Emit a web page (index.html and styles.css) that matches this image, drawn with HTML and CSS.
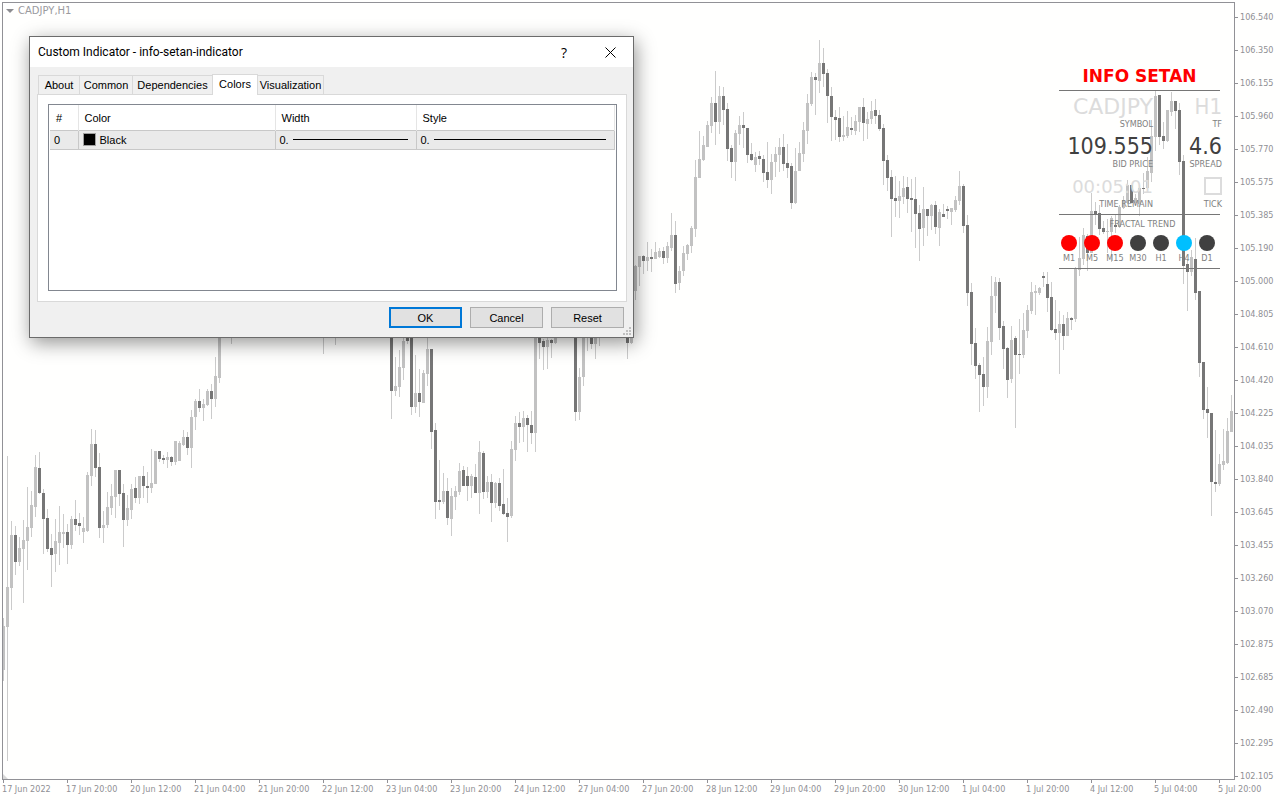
FILE: index.html
```
<!DOCTYPE html>
<html lang="en">
<head>
    <meta charset="UTF-8">
    <title>CADJPY,H1</title>
    <link rel="stylesheet" href="styles.css">
</head>
<body>
    <main class="terminal">
        <section class="plot">
            <svg class="candles" id="candles" aria-hidden="true"></svg>
            <div class="chart-symbol">
                <svg width="8" height="4" viewBox="0 0 8 4"><path d="M0 0h8L4 4z" fill="#8c8c90"/></svg>
                CADJPY,H1
            </div>
            <div class="corner-mark"></div>

            <aside class="info">
                <h1 class="info-title">INFO SETAN</h1>
                <div class="stats">
                    <div class="stat">
                        <span class="value muted">CADJPY</span>
                        <span class="caption">SYMBOL</span>
                    </div>
                    <div class="stat">
                        <span class="value">H1</span>
                        <span class="caption">TF</span>
                    </div>
                    <div class="stat">
                        <span class="value price">109.555</span>
                        <span class="caption">BID PRICE</span>
                    </div>
                    <div class="stat">
                        <span class="value price">4.6</span>
                        <span class="caption">SPREAD</span>
                    </div>
                    <div class="stat">
                        <span class="value timer">00:05:01</span>
                        <span class="caption">TIME REMAIN</span>
                    </div>
                    <div class="stat">
                        <span class="value"><i class="tick-box"></i></span>
                        <span class="caption">TICK</span>
                    </div>
                </div>
                <div class="trend">
                    <div class="trend-title">FRACTAL TREND</div>
                    <ul class="trend-list">
                        <li class="down">M1</li>
                        <li class="down">M5</li>
                        <li class="down">M15</li>
                        <li>M30</li>
                        <li>H1</li>
                        <li class="up">H4</li>
                        <li>D1</li>
                    </ul>
                </div>
            </aside>
        </section>

        <ul class="price-axis">
            <li>106.540</li>
            <li>106.350</li>
            <li>106.155</li>
            <li>105.960</li>
            <li>105.770</li>
            <li>105.575</li>
            <li>105.385</li>
            <li>105.190</li>
            <li>105.000</li>
            <li>104.805</li>
            <li>104.610</li>
            <li>104.420</li>
            <li>104.225</li>
            <li>104.035</li>
            <li>103.840</li>
            <li>103.645</li>
            <li>103.455</li>
            <li>103.260</li>
            <li>103.070</li>
            <li>102.875</li>
            <li>102.685</li>
            <li>102.490</li>
            <li>102.295</li>
            <li>102.105</li>
        </ul>

        <ul class="time-axis">
            <li>17 Jun 2022</li>
            <li>17 Jun 20:00</li>
            <li>20 Jun 12:00</li>
            <li>21 Jun 04:00</li>
            <li>21 Jun 20:00</li>
            <li>22 Jun 12:00</li>
            <li>23 Jun 04:00</li>
            <li>23 Jun 20:00</li>
            <li>24 Jun 12:00</li>
            <li>27 Jun 04:00</li>
            <li>27 Jun 20:00</li>
            <li>28 Jun 12:00</li>
            <li>29 Jun 04:00</li>
            <li>29 Jun 20:00</li>
            <li>30 Jun 12:00</li>
            <li>1 Jul 04:00</li>
            <li>1 Jul 20:00</li>
            <li>4 Jul 12:00</li>
            <li>5 Jul 04:00</li>
            <li>5 Jul 20:00</li>
        </ul>
    </main>

    <div class="dialog" role="dialog" aria-labelledby="dialogTitle">
        <header class="titlebar">
            <h2 id="dialogTitle">Custom Indicator - info-setan-indicator</h2>
            <button class="title-button" type="button">?</button>
            <button class="title-button" type="button" aria-label="Close">
                <svg width="11" height="11" viewBox="0 0 11 11"><path d="M.5.5l10 10M10.5.5l-10 10" stroke="#000"/></svg>
            </button>
        </header>
        <div class="tabs" role="tablist">
            <button class="tab tab-about" role="tab">About</button>
            <button class="tab tab-common" role="tab">Common</button>
            <button class="tab tab-deps" role="tab">Dependencies</button>
            <button class="tab tab-colors active" role="tab" aria-selected="true">Colors</button>
            <button class="tab tab-visual" role="tab">Visualization</button>
        </div>
        <div class="pane" role="tabpanel">
            <div class="list">
                <table>
                    <thead>
                        <tr>
                            <th class="col-num">#</th>
                            <th class="col-color">Color</th>
                            <th class="col-width">Width</th>
                            <th class="col-style">Style</th>
                        </tr>
                    </thead>
                    <tbody>
                        <tr>
                            <td>0</td>
                            <td><div class="cell"><i class="swatch"></i>Black</div></td>
                            <td><div class="cell">0.<i class="line"></i></div></td>
                            <td><div class="cell">0.<i class="line"></i></div></td>
                        </tr>
                    </tbody>
                </table>
            </div>
        </div>
        <footer class="actions">
            <button class="default" type="button">OK</button>
            <button type="button">Cancel</button>
            <button type="button">Reset</button>
        </footer>
        <svg class="grip" width="8" height="8" viewBox="0 0 8 8" fill="#bfbfbf"><path d="M6 0h2v2h-2zM3 3h2v2h-2zM6 3h2v2h-2zM0 6h2v2h-2zM3 6h2v2h-2zM6 6h2v2h-2z"/></svg>
    </div>

    <script src="chart.js"></script>
</body>
</html>
```
FILE: styles.css
```
* {
    box-sizing: border-box;
}

body {
    margin: 0;
    background: #fffffe;
    font-family: "Liberation Sans", Arial, sans-serif;
    font-size: 11px;
    color: #000;
    overflow: hidden;
}

ul {
    list-style: none;
    margin: 0;
    padding: 0;
}

button {
    font: inherit;
    color: inherit;
    padding: 0;
}

/* chart */
.terminal {
    display: grid;
    grid-template-columns: minmax(0, 1fr) 45px;
    grid-template-rows: minmax(0, 1fr) 20px;
    height: 100vh;
    padding: 2px 0 0 2px;
    font-family: "DejaVu Sans Condensed", "DejaVu Sans", sans-serif;
    font-size: 9px;
    color: #8f8f94;
}

.plot {
    position: relative;
    border: 1px solid #919196;
    overflow: hidden;
}

.candles {
    display: block;
    width: 100%;
    height: 100%;
    shape-rendering: crispEdges;
}

.candles .wick { fill: #cbcbcb; }
.candles .bull { fill: #c2c2c2; }
.candles .bear { fill: #767676; }

.chart-symbol {
    position: absolute;
    top: 2px;
    left: 3px;
    display: flex;
    align-items: center;
    gap: 4px;
    line-height: 12px;
    font-family: "DejaVu Sans", sans-serif;
    font-size: 10px;
    color: #9a9a9e;
}

.corner-mark {
    position: absolute;
    left: 0;
    bottom: 0;
    border-left: 5px solid #d8d8d8;
    border-top: 5px solid transparent;
}

.price-axis {
    overflow: hidden;
}

.price-axis li {
    display: flex;
    align-items: center;
    gap: 2px;
    line-height: 31px;
    margin-bottom: 2px;
}

.price-axis li::before {
    content: '';
    width: 3px;
    height: 1px;
    background: #919196;
}

.time-axis {
    grid-column: 1 / 3;
    display: flex;
    overflow: hidden;
}

.time-axis li {
    flex: 0 0 64px;
    line-height: 12px;
    white-space: nowrap;
}

.time-axis li::before {
    content: '';
    display: block;
    width: 1px;
    height: 3px;
    margin-left: 1px;
    background: #919196;
}

/* info panel over the chart */
.info {
    position: absolute;
    top: 59px;
    right: 14px;
    width: 161px;
    color: #808080;
}

.info-title {
    margin: 0;
    font: bold 17px/28px "DejaVu Sans", sans-serif;
    color: #f00;
    text-align: center;
}

.stats {
    display: grid;
    grid-template-columns: 94px 69px;
    row-gap: 4px;
    padding: 1px 0 6px;
    border-top: 1px solid #767676;
}

.stat {
    display: flex;
    flex-direction: column;
    align-items: flex-end;
}

.value {
    display: flex;
    align-items: center;
    height: 28px;
    font-size: 22px;
    color: #dcdcdc;
}

.value.muted {
    font-family: "DejaVu Sans", sans-serif;
}

.value.price {
    font-size: 23px;
    color: #404040;
}

.value.timer {
    font-family: "DejaVu Sans", sans-serif;
    font-size: 18px;
}

.tick-box {
    width: 18px;
    height: 18px;
    border: 2px solid #dcdcdc;
}

.caption {
    line-height: 8px;
}

.trend {
    padding: 4px 0 6px;
    border: solid #767676;
    border-width: 1px 0;
}

.trend-title {
    line-height: 10px;
    padding-left: 6px;
    text-align: center;
}

.trend-list {
    display: flex;
    margin-top: 6px;
}

.trend-list li {
    flex: 1;
    padding-right: 3px;
    line-height: 8px;
    text-align: center;
}

.trend-list li::before {
    content: '';
    display: block;
    width: 16px;
    height: 16px;
    margin: 0 0 3px 2px;
    border-radius: 50%;
    background: #404040;
}

.trend-list .down::before { background: #f00; }
.trend-list .up::before { background: #00bfff; }

/* dialog */
.dialog {
    position: absolute;
    top: 36px;
    left: 29px;
    width: 605px;
    background: #f0f0f0;
    border: 1px solid #6b6b6b;
    box-shadow: 2px 5px 18px rgba(0, 0, 0, 0.42);
}

.titlebar {
    display: flex;
    height: 30px;
    background: #fff;
}

.titlebar h2 {
    flex: 1;
    margin: 0;
    padding-left: 8px;
    font: 12px/30px Roboto, "Open Sans", sans-serif;
}

.title-button {
    display: flex;
    align-items: center;
    justify-content: center;
    width: 46px;
    background: none;
    border: 0;
    font: 14px "Open Sans", sans-serif;
}

.tabs {
    display: flex;
    align-items: flex-end;
    margin: 7px 0 0 8px;
}

.tab {
    height: 19px;
    background: #f0f0f0;
    border: 1px solid #d9d9d9;
    border-left-width: 0;
    border-bottom: 0;
}

.tab-about {
    width: 42px;
    border-left-width: 1px;
}

.tab-common { width: 53px; }
.tab-deps { width: 79px; border-right: 0; }
.tab-colors { width: 46px; }
.tab-visual { width: 66px; }

.tab.active {
    position: relative;
    height: 21px;
    margin-bottom: -1px;
    padding-bottom: 2px;
    background: #fff;
    border-left-width: 1px;
}

.pane {
    margin: 0 6px 0 7px;
    padding: 9px 9px 10px 10px;
    background: #fff;
    border: 1px solid #d9d9d9;
}

.list {
    min-height: 187px;
    padding: 0 1px;
    border: 1px solid #828790;
}

table {
    width: 100%;
    table-layout: fixed;
    border-collapse: collapse;
}

th {
    height: 25px;
    padding: 1px 0 0 6px;
    border-right: 1px solid #e5e5e5;
    font-weight: normal;
    text-align: left;
}

.col-num { width: 28px; }
.col-color { width: 197px; }
.col-width { width: 141px; }

td {
    height: 19px;
    padding: 0 8px 0 4px;
    background: #eaeaea;
    border: 1px solid #c8c8c8;
    border-left: 0;
}

.cell {
    display: flex;
    align-items: center;
    gap: 4px;
}

.swatch {
    width: 13px;
    height: 13px;
    background: #000;
    border: 1px solid #a0a0a0;
}

.line {
    flex: 1;
    height: 1px;
    background: #000;
}

.actions {
    display: flex;
    justify-content: flex-end;
    gap: 8px;
    padding: 5px 9px 9px;
}

.actions button {
    width: 73px;
    height: 21px;
    background: #e1e1e1;
    border: 1px solid #adadad;
}

.actions .default {
    border: 2px solid #0078d7;
}

.grip {
    position: absolute;
    right: 2px;
    bottom: 2px;
}
```
FILE: chart.js
```
// high, body top, body bottom, low, direction (1 up, 0 down)
const TOP = 3;
const STEP = 4;

const bars = {
    0: [
        [618,626,670,681,1],[456,587,627,761,1],[521,535,588,610,1],[526,535,562,575,0],[537,548,562,566,1],
        [520,540,549,603,1],[487,527,541,570,1],[491,505,528,537,1],[455,467,507,517,1],[452,468,493,494,0],
        [489,493,519,554,0],[509,518,549,552,0],[534,548,555,587,0],[519,541,554,572,1],[506,532,543,565,1],
        [514,532,534,548,1],[524,532,545,564,0],[516,519,545,549,1],[500,519,525,531,0],[513,523,526,535,0],
        [517,528,532,543,1],[472,475,531,532,1],[429,444,476,486,1],[430,444,468,477,0],[453,467,528,538,0],
        [511,525,528,543,1],[492,507,525,528,1],[484,496,508,515,1],[470,470,497,518,1],[470,470,494,506,0],
        [484,493,520,547,0],[495,508,520,526,1],[484,489,510,519,1],[477,488,498,503,0],[476,476,498,504,1],
        [466,476,486,498,0],[472,486,488,503,0],[449,483,488,493,1],[451,451,484,484,1],[451,451,459,462,0],
        [455,458,460,464,0],[452,457,460,468,1],[456,457,462,466,0],[441,441,462,465,1],[441,443,461,461,1],
        [430,437,445,446,1],[432,437,448,455,0],[410,417,448,468,1],[399,401,417,430,1],[389,401,408,412,0],
        [399,404,408,421,1],[389,391,405,406,1],[384,391,399,419,0],[357,376,399,407,1],[300,310,378,383,1]
    ],
    57: [[300,310,330,344,1]],
    80: [[300,310,330,354,1]],
    83: [[300,310,330,345,1]],
    97: [
        [300,310,391,419,0],[357,386,391,396,1],[350,367,387,397,1],[330,341,368,380,1],[320,325,341,344,0],
        [320,325,407,415,0],[355,393,407,413,1],[369,393,402,417,0],[370,373,403,403,1],[330,349,374,386,1],
        [349,349,432,449,0],[423,430,502,519,0],[460,500,502,510,0],[473,491,502,504,1],[478,491,518,525,0],
        [488,496,519,536,1],[486,491,497,510,1],[463,471,492,495,1],[466,470,486,486,0],[467,476,486,501,0],
        [474,476,486,498,1],[464,477,493,493,0],[441,452,493,514,1],[451,453,492,499,0],[476,482,492,498,1],
        [474,482,503,522,0],[482,483,503,508,1],[478,483,506,511,0],[469,504,514,515,0],[498,513,517,542,0],
        [441,449,516,518,1],[416,423,450,461,1],[412,423,427,443,0],[411,418,427,442,1],[415,418,425,452,0],
        [411,425,433,444,0],[320,325,433,452,1],[320,325,343,359,0],[339,341,347,370,0],[330,340,347,369,1],
        [339,340,343,358,0],[320,325,343,344,1]
    ],
    143: [
        [320,325,412,421,0],[368,377,412,420,1],[320,325,377,386,1],[320,325,330,351,1],[320,325,344,349,0],
        [320,325,344,359,1],[320,325,330,346,1]
    ],
    156: [
        [320,325,343,359,0],[320,325,343,344,1],[265,266,291,300,1],[256,256,267,286,1],[255,256,261,274,0],
        [242,257,261,271,1],[249,257,259,272,0],[242,252,259,259,1],[248,251,257,258,1],[247,251,258,264,0],
        [242,246,258,263,1],[213,235,248,251,1],[221,235,284,293,0],[266,271,283,290,1],[246,253,271,276,1],
        [244,245,254,260,1],[226,228,246,253,1],[160,177,229,237,1],[131,159,178,178,1],[136,145,160,161,1],
        [121,125,147,147,1],[97,103,126,133,1],[71,103,122,145,0],[86,96,122,134,1],[87,96,110,125,0],
        [103,109,149,161,0],[145,148,162,178,0],[130,133,162,181,1],[116,125,134,145,1],[112,125,128,148,0],
        [128,128,155,163,0],[143,154,160,161,0],[152,157,165,172,1],[151,156,159,165,0],[155,159,173,182,0],
        [142,172,180,188,0],[154,162,180,194,1],[147,154,162,177,1],[138,147,155,172,1],[134,147,164,171,0],
        [144,163,168,178,0],[163,166,203,209,0],[148,171,203,204,1],[142,153,171,171,1],[122,130,154,162,1],
        [94,103,131,144,1],[72,77,104,106,1],[73,77,80,115,0],[40,63,81,93,1],[48,63,74,87,0],
        [69,73,96,123,0],[87,96,117,141,0],[110,117,120,140,0],[107,118,137,142,0],[116,135,137,141,1],
        [111,127,136,138,1],[117,128,130,135,0],[115,121,131,135,1],[107,107,122,132,1],[98,107,123,141,0],
        [112,119,124,139,1],[101,111,119,124,1],[99,110,116,124,0],[110,115,129,131,0],[124,128,161,185,0],
        [155,160,178,191,0],[170,177,199,237,0],[176,198,201,217,0],[181,196,201,218,1],[176,188,197,204,1],
        [177,187,199,213,0],[179,198,200,232,0],[177,199,214,248,0],[205,213,229,261,0],[187,209,228,246,1],
        [209,209,216,236,0],[204,205,216,230,1],[201,205,227,234,0],[209,212,228,246,1],[204,214,217,217,0],
        [206,209,211,219,0],[208,208,212,225,1],[196,200,210,212,1],[171,186,201,205,1],[184,186,226,233,0],
        [215,225,293,306,0],[283,292,344,365,0],[328,343,366,379,0],[363,365,375,412,0],[357,374,387,406,0],
        [327,341,387,398,1],[276,296,342,355,1],[277,282,296,313,1],[278,282,328,340,0],[321,326,349,369,0],
        [347,348,380,398,0],[326,340,379,383,1],[336,338,355,428,0],[319,354,355,374,0],[313,330,355,358,1],
        [305,310,331,338,1],[282,292,311,314,1],[285,291,293,315,1],[287,288,293,295,1],[272,276,278,287,0],
        [272,284,298,312,0],[282,297,330,331,0],[300,329,333,340,0],[311,324,333,374,1],[315,324,336,350,0],
        [312,318,336,336,1],[317,318,320,330,0],[267,268,319,322,1],[237,258,270,276,1],[228,235,259,265,1],
        [234,236,253,271,0],[193,211,253,253,1],[202,211,214,225,0],[205,213,229,235,0],[221,228,232,234,0],
        [219,231,232,253,1],[216,218,232,262,1],[215,225,227,233,0],[205,207,227,228,1],[196,200,208,209,1],
        [180,185,203,204,1],[185,185,203,203,0],[194,198,203,206,1],[185,188,204,216,1],[173,188,189,194,0],
        [157,171,188,189,1],[120,136,173,182,1],[91,96,137,151,1],[95,95,137,145,0],[122,136,141,149,0],
        [110,110,141,142,1],[92,101,112,116,1],[101,101,111,129,0],[103,110,162,175,0],[155,161,266,284,0],
        [259,264,272,311,0],[250,257,272,276,1],[238,259,293,300,0],[291,291,363,377,0],[362,362,410,419,0],
        [387,409,413,438,0],[413,413,482,516,0],[430,482,484,492,0],[454,464,484,486,1],[429,461,465,470,1],
        [418,431,463,464,1],[395,411,432,432,1]
    ]
};

const svg = document.getElementById('candles');

function addRect(className, x, y, width, height) {
    const rect = document.createElementNS('http://www.w3.org/2000/svg', 'rect');
    rect.setAttribute('class', className);
    rect.setAttribute('x', x);
    rect.setAttribute('y', y - TOP);
    rect.setAttribute('width', width);
    rect.setAttribute('height', height);
    svg.appendChild(rect);
}

Object.keys(bars).forEach(start => {
    bars[start].forEach(([high, top, bottom, low, up], i) => {
        const x = (Number(start) + i) * STEP;
        addRect('wick', x, high, 1, low - high);
        addRect(up ? 'bull' : 'bear', x - 1, top, 3, bottom - top);
    });
});
```
